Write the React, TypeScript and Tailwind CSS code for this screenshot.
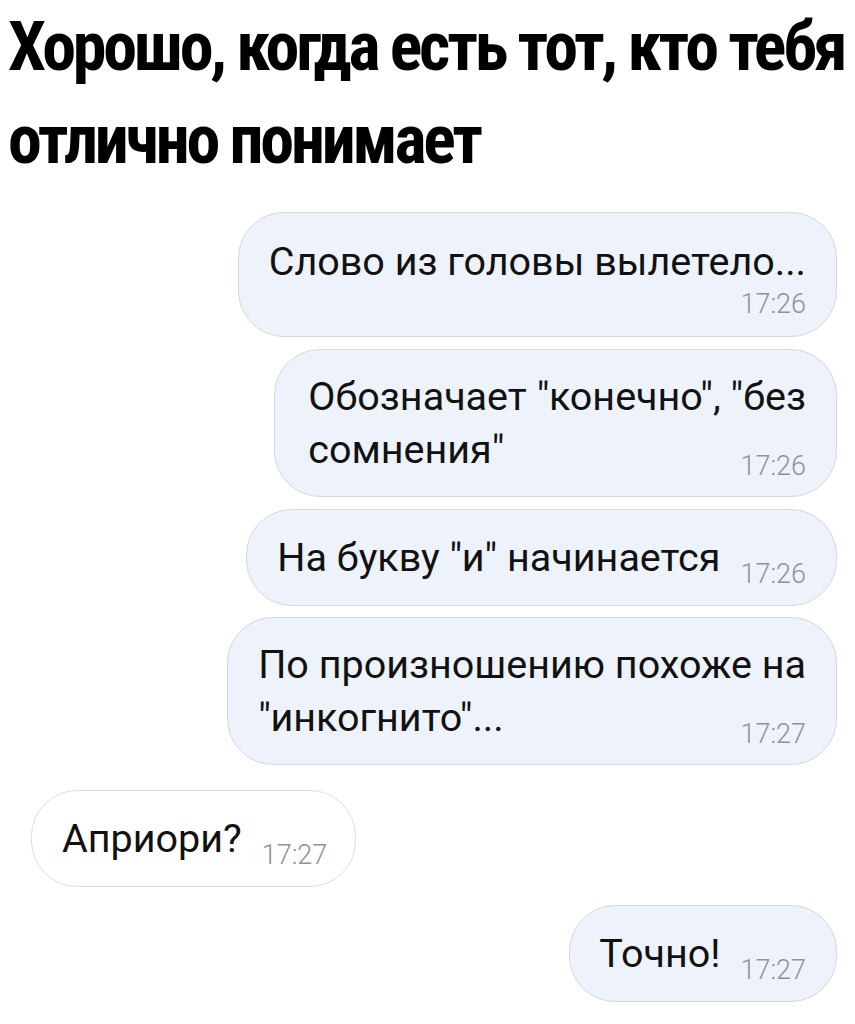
import React from "react";

const bubbleOut = "rounded-[46px] border border-[#d3d8df] bg-[#eef3fb]";
const bubbleIn = "rounded-[46px] border border-[#dedede] bg-white";
const msg = "text-[39.5px] leading-[53px] text-[#111] whitespace-nowrap";
const ts = "text-[27px] leading-[28px] font-light text-[#8f9297] whitespace-nowrap";

export default function App() {
  return (
    <div
      className="w-[855px] h-[1024px] overflow-hidden bg-white"
      style={{ fontFamily: "Roboto, 'Noto Sans', sans-serif" }}
    >
      <h1
        className="pl-[8px] pt-[1px] text-[68px] leading-[93px] font-bold text-black tracking-[-3.2px]"
        style={{
          fontFamily:
            "'Roboto Condensed', 'Liberation Sans Narrow', 'DejaVu Sans Condensed', 'Open Sans', sans-serif",
        }}
      >
        <div className="whitespace-nowrap">Хорошо, когда есть тот, кто тебя</div>
        <div className="whitespace-nowrap">отлично понимает</div>
      </h1>

      <div className="flex flex-col pr-[18px] mt-[25px]">
        {/* 1 */}
        <div className="flex justify-end">
          <div className={`${bubbleOut} flex flex-col pl-[30px] pr-[30px] pt-[22px] pb-[18px]`}>
            <div className={msg}>Слово из головы вылетело...</div>
            <div className={`${ts} self-end mt-[2px]`}>17:26</div>
          </div>
        </div>

        {/* 2 */}
        <div className="flex justify-end mt-[12px]">
          <div className={`${bubbleOut} grid pl-[33px] pr-[30px] py-[20px]`}>
            <div className={`${msg} col-start-1 row-start-1`}>
              Обозначает "конечно", "без
              <br />
              сомнения"
            </div>
            <div className={`${ts} col-start-1 row-start-1 self-end justify-self-end translate-y-[4px]`}>
              17:26
            </div>
          </div>
        </div>

        {/* 3 */}
        <div className="flex justify-end mt-[12px]">
          <div className={`${bubbleOut} flex items-baseline gap-[20px] pl-[30px] pr-[30px] py-[21px]`}>
            <div className={msg}>На букву "и" начинается</div>
            <div className={`${ts} translate-y-[12px]`}>17:26</div>
          </div>
        </div>

        {/* 4 */}
        <div className="flex justify-end mt-[11px]">
          <div className={`${bubbleOut} grid pl-[30px] pr-[30px] py-[20px]`}>
            <div className={`${msg} col-start-1 row-start-1`}>
              По произношению похоже на
              <br />
              "инкогнито"...
            </div>
            <div className={`${ts} col-start-1 row-start-1 self-end justify-self-end translate-y-[4px]`}>
              17:27
            </div>
          </div>
        </div>

        {/* 5 incoming */}
        <div className="flex justify-start pl-[31px] mt-[25px]">
          <div className={`${bubbleIn} flex items-baseline gap-[20px] pl-[30px] pr-[28px] py-[21px]`}>
            <div className={msg}>Априори?</div>
            <div className={`${ts} translate-y-[12px]`}>17:27</div>
          </div>
        </div>

        {/* 6 */}
        <div className="flex justify-end mt-[18px]">
          <div className={`${bubbleOut} flex items-baseline gap-[20px] pl-[29px] pr-[30px] py-[21px]`}>
            <div className={msg}>Точно!</div>
            <div className={`${ts} translate-y-[12px]`}>17:27</div>
          </div>
        </div>
      </div>
    </div>
  );
}
